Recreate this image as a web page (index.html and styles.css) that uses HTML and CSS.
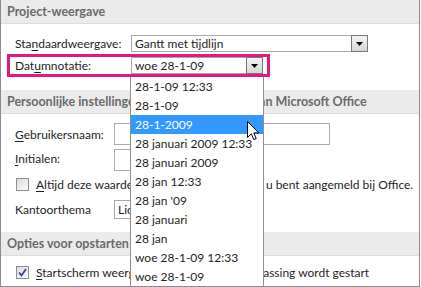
FILE: index.html
```html
<!DOCTYPE html>
<html lang="nl">
<head>
    <meta charset="UTF-8">
    <title>Project-opties</title>
    <link rel="stylesheet" href="styles.css">
</head>
<body>

<div class="options">

    <section class="group">
        <h2 class="group-title">Project-weergave</h2>
        <div class="group-body view-body">
            <div class="field">
                <label class="label label-view">Sta<u>n</u>daardweergave:</label>
                <div class="combo combo-view">
                    <span class="combo-text">Gantt met tijdlijn</span>
                    <span class="combo-btn"><svg width="7" height="4"><path d="M0 0h7L3.5 4z"/></svg></span>
                </div>
            </div>
            <div class="field field-marked">
                <label class="label label-view">Dat<u>u</u>mnotatie:</label>
                <div class="combo combo-date">
                    <span class="combo-text">woe 28-1-09</span>
                    <span class="combo-btn"><svg width="7" height="4"><path d="M0 0h7L3.5 4z"/></svg></span>
                </div>
            </div>
        </div>
    </section>

    <section class="group">
        <h2 class="group-title">Persoonlijke instellingen voor uw exemplaar van Microsoft Office</h2>
        <div class="group-body user-body">
            <div class="field">
                <label class="label label-user"><u>G</u>ebruikersnaam:</label>
                <div class="textbox textbox-name"></div>
            </div>
            <div class="field">
                <label class="label label-user"><u>I</u>nitialen:</label>
                <div class="textbox textbox-initials"></div>
            </div>
            <div class="field check-field">
                <span class="checkbox"></span>
                <span><u>A</u>ltijd deze waarden gebruiken, ongeacht of u bent aangemeld bij Office.</span>
            </div>
            <div class="field field-theme">
                <label class="label label-user">Kantoorthema</label>
                <div class="combo combo-theme">
                    <span class="combo-text">Lichtgrijs</span>
                </div>
            </div>
        </div>
    </section>

    <section class="group">
        <h2 class="group-title">Opties voor opstarten</h2>
        <div class="group-body start-body">
            <div class="field check-field">
                <span class="checkbox checked"><svg width="9" height="9"><path d="M1 4.5l2.5 3L8 1" fill="none" stroke="#2f4a8f" stroke-width="1.8"/></svg></span>
                <span><u>S</u>tartscherm weergeven wanneer deze toepassing wordt gestart</span>
            </div>
        </div>
    </section>

    <ul class="dropdown">
        <li>28-1-09 12:33</li>
        <li>28-1-09</li>
        <li class="selected">28-1-2009</li>
        <li>28 januari 2009 12:33</li>
        <li>28 januari 2009</li>
        <li>28 jan 12:33</li>
        <li>28 jan '09</li>
        <li>28 januari</li>
        <li>28 jan</li>
        <li>woe 28-1-09 12:33</li>
        <li>woe 28-1-09</li>
    </ul>

    <svg class="cursor" width="13" height="20" viewBox="0 0 13 20">
        <path d="M0.5 0.5V16.5L4.3 12.8L6.8 18.6L9.2 17.6L6.8 11.9H11.8Z" fill="#fff" stroke="#000" stroke-width="1" stroke-linejoin="round"/>
    </svg>

</div>

</body>
</html>
```

FILE: styles.css
```css
body {
    margin: 0;
    font-family: Lato, "Liberation Sans", sans-serif;
    font-size: 12px;
    color: #1e1e1e;
    background: #fff;
}

.options {
    position: relative;
    width: 418px;
    height: 286px;
    border: 1px solid #8c8c8c;
    border-top: none;
    overflow: hidden;
}

.group-title {
    margin: 0;
    height: 23px;
    line-height: 23px;
    padding-left: 6px;
    background: #ebebeb;
    border-bottom: 1px solid #dcdcdc;
    font-size: 12.5px;
    font-weight: bold;
    color: #6a6a6a;
    white-space: nowrap;
}

.field {
    display: flex;
    align-items: center;
    white-space: nowrap;
}

.label {
    flex: none;
}

u {
    text-decoration-thickness: 1px;
    text-underline-offset: 2px;
}

/* Project-weergave */
.view-body {
    padding: 11px 0 13px 14px;
}

.label-view {
    width: 116px;
}

.field-marked {
    width: fit-content;
    margin: 2px 0 0 -8px;
    padding: 0 4px 0 5px;
    border: 3px solid #e2197f;
}

.combo {
    display: flex;
    align-items: center;
    box-sizing: border-box;
    height: 17px;
    border: 1px solid #a9a9a9;
    background: #fff;
}

.combo-text {
    flex: 1;
    padding-left: 3px;
    overflow: hidden;
}

.combo-view {
    width: 237px;
}

.combo-date {
    width: 132px;
}

.combo-btn {
    display: flex;
    align-items: center;
    justify-content: center;
    box-sizing: border-box;
    width: 17px;
    height: 17px;
    margin-right: -1px;
    border: 1px solid #7a7a7a;
    background: linear-gradient(#f4f4f4, #d6d6d6);
}

/* Persoonlijke instellingen */
.user-body {
    padding: 9px 0 13px 14px;
}

.label-user {
    width: 99px;
}

.textbox {
    box-sizing: border-box;
    height: 22px;
    border: 1px solid #ababab;
}

.textbox-name {
    width: 216px;
}

.textbox-initials {
    width: 120px;
    margin-top: 4px;
}

.check-field {
    height: 16px;
    margin-top: 5px;
}

.checkbox {
    display: flex;
    align-items: center;
    justify-content: center;
    box-sizing: border-box;
    width: 13px;
    height: 13px;
    margin: 0 7px 0 1px;
    border: 1px solid #8f8f8f;
    background: linear-gradient(135deg, #dcdcdc, #fbfbfb);
}

.field-theme {
    margin-top: 8px;
}

.combo-theme {
    width: 140px;
    height: 19px;
}

/* Opties voor opstarten */
.start-body {
    padding: 3px 0 0 14px;
}

/* open list of the date format box */
.dropdown {
    position: absolute;
    left: 129px;
    top: 77px;
    width: 132px;
    margin: 0;
    padding: 0;
    list-style: none;
    background: #fff;
    border: 1px solid #8f8f8f;
    border-top: none;
}

.dropdown li {
    height: 19px;
    line-height: 19px;
    padding-left: 4px;
    white-space: nowrap;
    overflow: hidden;
}

.dropdown li.selected {
    background: #3399ff;
    color: #fff;
}

.cursor {
    position: absolute;
    left: 246px;
    top: 121px;
}
```
